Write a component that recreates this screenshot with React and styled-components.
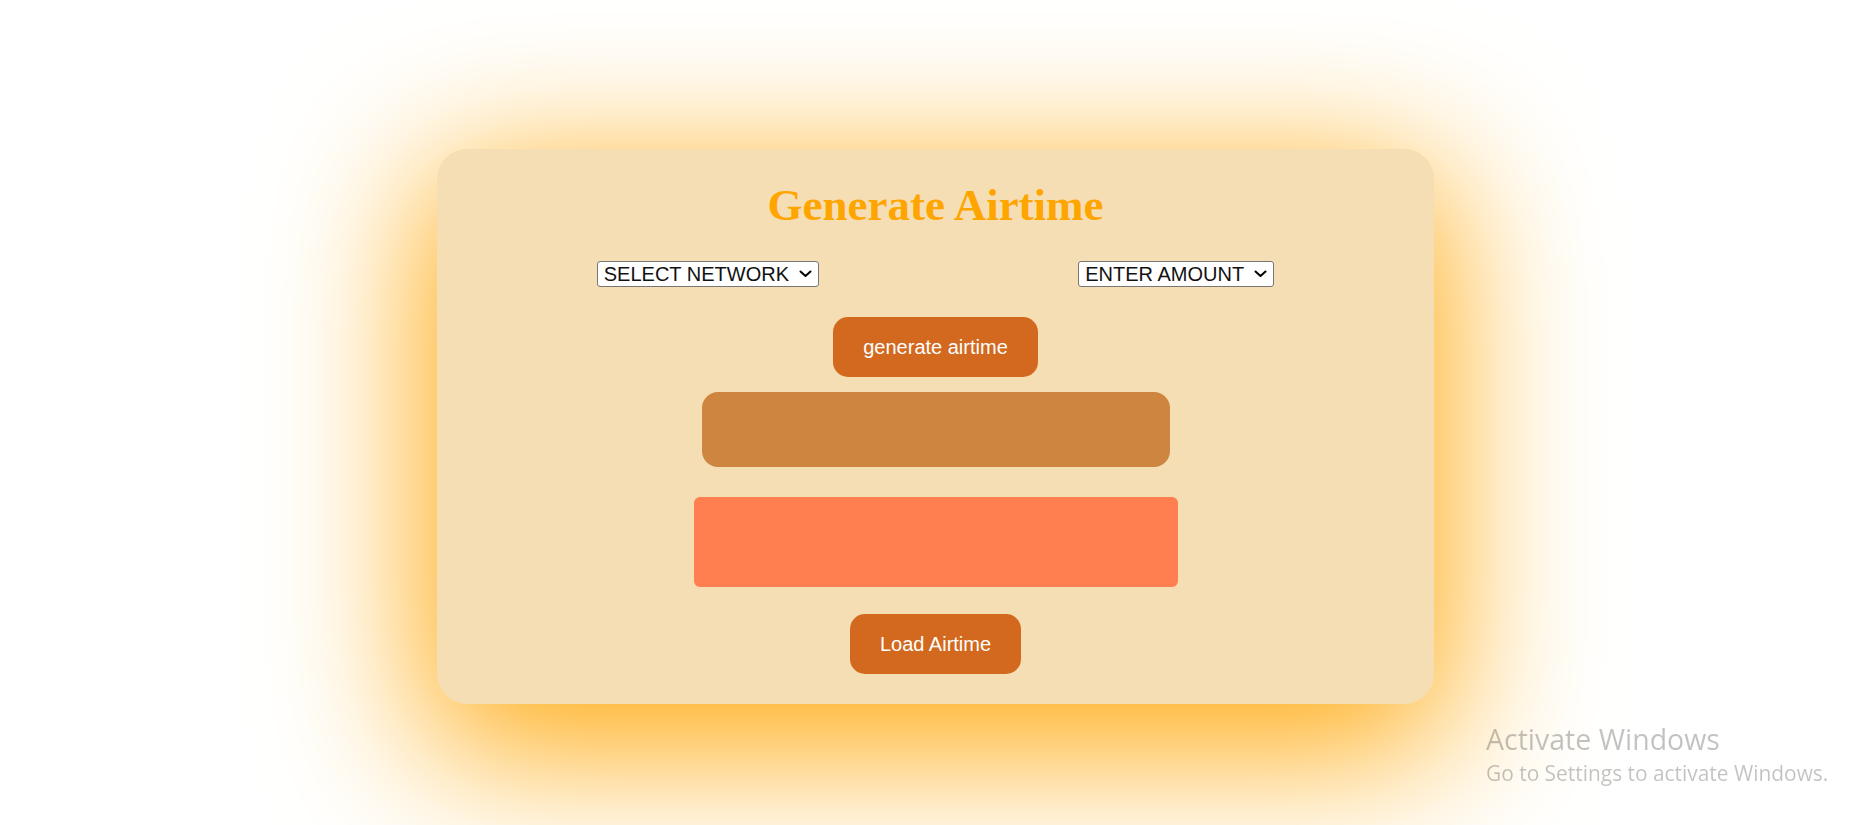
import React from 'react';
import styled, { createGlobalStyle } from 'styled-components';

const GlobalStyle = createGlobalStyle`
    html, body {
        margin: 0;
        padding: 0;
        background: #fff;
        font-family: "Liberation Sans", Arial, sans-serif;
    }
`;

const Chevron = () => (
    <svg width="13" height="8" viewBox="0 0 13 8" fill="none">
        <path d="M1.5 1.5 L6.5 6 L11.5 1.5" stroke="#000" strokeWidth="2" strokeLinecap="round" strokeLinejoin="round" />
    </svg>
);

const App = () => {
    return (
        <>
            <GlobalStyle />
            <Page>
                <Card>
                    <Title>Generate Airtime</Title>
                    <SelectRow>
                        <SelectWrap>
                            <Select defaultValue="">
                                <option value="">SELECT NETWORK</option>
                                <option value="mtn">MTN</option>
                                <option value="glo">GLO</option>
                                <option value="airtel">AIRTEL</option>
                                <option value="9mobile">9MOBILE</option>
                            </Select>
                            <Chevron />
                        </SelectWrap>
                        <SelectWrap>
                            <Select defaultValue="">
                                <option value="">ENTER AMOUNT</option>
                                <option value="100">100</option>
                                <option value="200">200</option>
                                <option value="500">500</option>
                                <option value="1000">1000</option>
                            </Select>
                            <Chevron />
                        </SelectWrap>
                    </SelectRow>
                    <Button>generate airtime</Button>
                    <Panel variant="pin" />
                    <Panel variant="input" />
                    <Button $gap="27px">Load Airtime</Button>
                </Card>
            </Page>
            <Watermark>
                <h2>Activate Windows</h2>
                <p>Go to Settings to activate Windows.</p>
            </Watermark>
        </>
    )
}

const Page = styled.div`
    min-height: 100vh;
    box-sizing: border-box;
    padding: 149px 2px 0 0;
    display: flex;
    justify-content: center;
    align-items: flex-start;
    overflow: hidden;
`;

const Card = styled.div`
    width: 997px;
    box-sizing: border-box;
    padding: 30px;
    background: wheat;
    border-radius: 30px;
    box-shadow: 0 35px 150px 15px #ffab12;
    display: flex;
    flex-direction: column;
    align-items: center;
`;

const Title = styled.h1`
    margin: 0 0 30px;
    font-family: "Liberation Serif", "Times New Roman", serif;
    font-weight: bold;
    font-size: 45px;
    color: orange;
`;

const SelectRow = styled.div`
    align-self: stretch;
    display: flex;
    justify-content: space-around;
`;

const SelectWrap = styled.div`
    position: relative;
    display: inline-flex;
    svg {
        position: absolute;
        right: 7px;
        top: 9px;
        pointer-events: none;
    }
`;

const Select = styled.select`
    appearance: none;
    height: 26px;
    box-sizing: border-box;
    margin: 0;
    padding: 0 28px 0 6px;
    border: 1px solid #767676;
    border-radius: 3px;
    font-family: "Liberation Sans", Arial, sans-serif;
    font-size: 20px;
    line-height: 24px;
    color: #111;
    background: #fff;
`;

const Button = styled.button`
    margin-top: ${props => props.$gap || '30px'};
    height: 60px;
    padding: 0 30px;
    border: none;
    border-radius: 15px;
    background: chocolate;
    color: #fff;
    font-family: "Liberation Sans", Arial, sans-serif;
    font-size: 20px;
    cursor: pointer;
`;

const Panel = styled.div`
    width: ${props => props.variant === 'pin' ? '468px' : '484px'};
    height: ${props => props.variant === 'pin' ? '75px' : '90px'};
    margin-top: ${props => props.variant === 'pin' ? '15px' : '30px'};
    border-radius: ${props => props.variant === 'pin' ? '16px' : '6px'};
    background: ${props => props.variant === 'pin' ? 'peru' : 'coral'};
`;

const Watermark = styled.div`
    position: fixed;
    left: 1486px;
    top: 721px;
    color: rgba(0, 0, 0, 0.24);
    font-family: "Open Sans", "Noto Sans", sans-serif;
    pointer-events: none;
    h2 {
        margin: 0;
        font-weight: normal;
        font-size: 28.5px;
        line-height: 36px;
    }
    p {
        margin: 3px 0 0;
        font-size: 20.9px;
        line-height: 26px;
    }
`;

export default App;
